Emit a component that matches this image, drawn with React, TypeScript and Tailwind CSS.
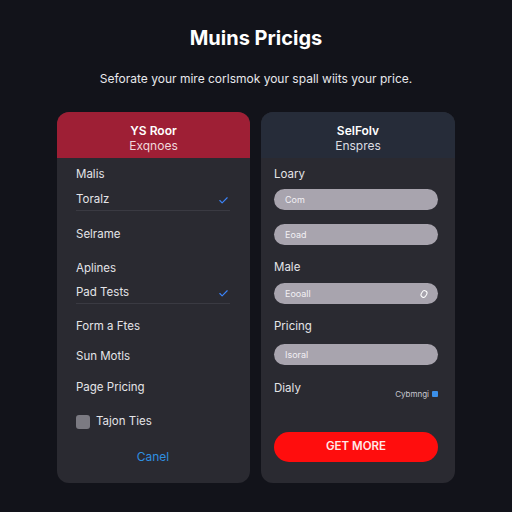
import { Check } from "lucide-react";

const font = { fontFamily: "Inter, 'Liberation Sans', sans-serif" };

const Row = ({ label, checked, divider, className = "" }: { label: string; checked?: boolean; divider?: boolean; className?: string }) => (
	<div className={`h-[20px] shrink-0 flex items-center justify-between ${divider ? "border-b border-[#3a3a42] h-[21px]" : ""} ${className}`}>
		<span className="text-[11.5px] text-[#e4e4e8]">{label}</span>
		{checked && <Check className="mr-[1px] text-[#3b82f6]" size={11} strokeWidth={2.5} />}
	</div>
);

const FeatureCard = () => (
	<div className="w-[193px] h-[371px] rounded-[12px] bg-[#2a2a31] overflow-hidden flex flex-col">
		<div className="h-[46px] shrink-0 bg-[#9e1f35] flex flex-col items-center justify-center pt-[6px] leading-[15px]">
			<span className="text-[12px] font-semibold text-white">YS Roor</span>
			<span className="text-[12px] text-[#f0d8dc]">Exqnoes</span>
		</div>
		<div className="flex flex-col pl-[19px] pr-[20px] pt-[7px]">
			<Row label="Malis" />
			<Row label="Toralz" checked divider className="mt-[5px]" />
			<Row label="Selrame" className="mt-[14px]" />
			<Row label="Aplines" className="mt-[14px]" />
			<Row label="Pad Tests" checked divider className="mt-[4px]" />
			<Row label="Form a Ftes" className="mt-[13px]" />
			<Row label="Sun Motls" className="mt-[10px]" />
			<Row label="Page Pricing" className="mt-[11px]" />
			<div className="mt-[14px] h-[20px] flex items-center gap-[6px]">
				<span className="w-[14px] h-[14px] rounded-[3px] bg-[#7b7a82]" />
				<span className="text-[11.5px] text-[#e4e4e8]">Tajon Ties</span>
			</div>
			<span className="mt-[15px] h-[20px] flex items-center justify-center text-[12px] text-[#2f8fe0]">Canel</span>
		</div>
	</div>
);

const Field = ({ value, icon, className = "" }: { value: string; icon?: boolean; className?: string }) => (
	<div className={`h-[21px] shrink-0 rounded-full bg-[#a8a4ae] flex items-center justify-between px-[11px] ${className}`}>
		<span className="text-[9px] text-[#f2f0f4]">{value}</span>
		{icon && <span className="w-[6px] h-[8px] rounded-full border border-white rotate-[30deg]" />}
	</div>
);

const Label = ({ text, className = "" }: { text: string; className?: string }) => (
	<span className={`h-[20px] shrink-0 flex items-center text-[11.5px] text-[#e4e4e8] ${className}`}>{text}</span>
);

const FormCard = () => (
	<div className="w-[194px] h-[371px] rounded-[12px] bg-[#2a2a31] overflow-hidden flex flex-col">
		<div className="h-[46px] shrink-0 bg-[#262c39] flex flex-col items-center justify-center pt-[6px] leading-[15px]">
			<span className="text-[12px] font-semibold text-white">SelFolv</span>
			<span className="text-[12px] text-[#dcdde2]">Enspres</span>
		</div>
		<div className="flex flex-col pl-[13px] pr-[17px] pt-[7px]">
			<Label text="Loary" />
			<Field value="Com" className="mt-[4px]" />
			<Field value="Eoad" className="mt-[14px]" />
			<Label text="Male" className="mt-[13px]" />
			<Field value="Eooall" icon className="mt-[5px]" />
			<Label text="Pricing" className="mt-[13px]" />
			<Field value="Isoral" className="mt-[7px]" />
			<div className="mt-[14px] h-[20px] flex items-center justify-between">
				<span className="text-[11.5px] text-[#e4e4e8]">Dialy</span>
				<span className="mt-[10px] flex items-center gap-[3px] text-[8px] text-[#c8c8d0]">
					Cybmngi
					<span className="w-[6px] h-[6px] rounded-[1px] bg-[#3b8fe8]" />
				</span>
			</div>
			<button className="mt-[33px] h-[30px] shrink-0 rounded-full bg-[#ff0d0d] text-[11.5px] font-semibold text-[#ffe8e8]">
				GET MORE
			</button>
		</div>
	</div>
);

const App = () => (
	<div className="w-[512px] h-[512px] bg-[#12131a] flex flex-col items-center" style={font}>
		<h1 className="mt-[26px] text-[20px] font-bold text-white leading-[24px]">Muins Pricigs</h1>
		<p className="mt-[21px] text-[12px] text-[#e8e8ec] leading-[16px]">Seforate your mire corlsmok your spall wiits your price.</p>
		<div className="mt-[25px] flex gap-[11px]">
			<FeatureCard />
			<FormCard />
		</div>
	</div>
);

export default App;
